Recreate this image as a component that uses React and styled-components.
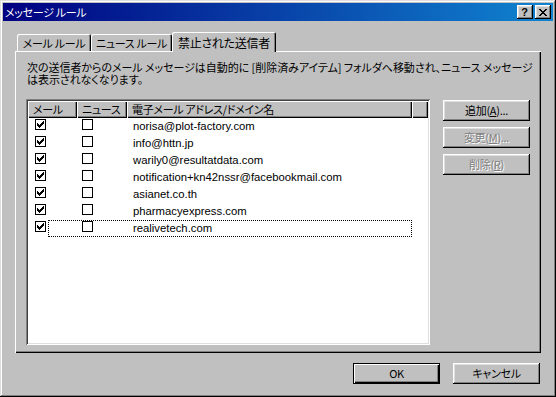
import React from 'react';
import styled, { createGlobalStyle, css } from 'styled-components';

// 画面データ
const senders = [
  'norisa@plot-factory.com',
  'info@httn.jp',
  'warily0@resultatdata.com',
  'notification+kn42nssr@facebookmail.com',
  'asianet.co.th',
  'pharmacyexpress.com',
  'realivetech.com',
];

// classic check glyph, pixel runs [x, y, w]
const checkRuns = [
  [7, 1, 1], [6, 2, 2], [1, 3, 1], [5, 3, 3], [1, 4, 2], [4, 4, 3],
  [1, 5, 5], [2, 6, 3], [3, 7, 1],
];
const closeRuns = [
  [0, 0, 2], [6, 0, 2], [1, 1, 2], [5, 1, 2], [2, 2, 4], [3, 3, 2],
  [2, 4, 4], [1, 5, 2], [5, 5, 2], [0, 6, 2], [6, 6, 2],
];

const Pixels = ({ runs, w, h }) => (
  <svg width={w} height={h} viewBox={`0 0 ${w} ${h}`} shapeRendering='crispEdges'>
    {runs.map(([x, y, rw], i) => <rect key={i} x={x} y={y} width={rw} height={1} fill='#000' />)}
  </svg>
);

const CheckBox = ({ checked }) => (
  <Box>{checked && <Pixels runs={checkRuns} w={9} h={9} />}</Box>
);

const App = () => (
  <>
    <GlobalStyle />
    <Window>
      <TitleBar>
        <Title>メッセージ ルール</Title>
        <TitleButtons>
          <CaptionButton>?</CaptionButton>
          <CaptionButton><Pixels runs={closeRuns} w={8} h={7} /></CaptionButton>
        </TitleButtons>
      </TitleBar>
      <Body>
        <TabStrip>
          <Tab width={74}>メール ルール</Tab>
          <Tab width={81}>ニュース ルール</Tab>
          <Tab width={104} active>禁止された送信者</Tab>
        </TabStrip>
        <Panel>
          <Description>
            <Line>次の送信者からのメール メッセージは自動的に [削除済みアイテム] フォルダへ移動され、ニュース メッセージ</Line>
            <Line>は表示されなくなります。</Line>
          </Description>
          <Content>
            <List>
              <Header>
                <HeaderCell>メール</HeaderCell>
                <HeaderCell>ニュース</HeaderCell>
                <HeaderCell>電子メール アドレス/ドメイン名</HeaderCell>
                <HeaderCell />
              </Header>
              {senders.map((s, i) => (
                <Row key={s}>
                  <MailCell><CheckBox checked /></MailCell>
                  <RowBody focused={i === senders.length - 1}>
                    <Gap />
                    <NewsCell><CheckBox /></NewsCell>
                    <AddrCell>{s}</AddrCell>
                  </RowBody>
                </Row>
              ))}
            </List>
            <SideButtons>
              <Button>追加(<u>A</u>)...</Button>
              <Button disabled>変更(<u>M</u>)...</Button>
              <Button disabled>削除(<u>R</u>)</Button>
            </SideButtons>
          </Content>
        </Panel>
        <Footer>
          <Button isDefault>OK</Button>
          <Button>キャンセル</Button>
        </Footer>
      </Body>
    </Window>
  </>
);

export default App;

const GlobalStyle = createGlobalStyle`
  html, body {
    margin: 0;
    padding: 0;
    background: #c0c0c0;
  }
  body {
    font-family: "Noto Sans CJK JP", "Liberation Sans", sans-serif;
    font-size: 11px;
    letter-spacing: -0.3px;
    font-feature-settings: "palt";
    color: #000;
  }
`;

const raised = css`
  box-shadow: inset -1px -1px #000, inset 1px 1px #fff, inset -2px -2px #808080, inset 2px 2px #dfdfdf;
`;

const Window = styled.div`
  width: 556px;
  height: 397px;
  box-sizing: border-box;
  padding: 3px;
  background: #c0c0c0;
  box-shadow: inset -1px -1px #000, inset 1px 1px #dfdfdf, inset -2px -2px #808080, inset 2px 2px #fff;
  display: flex;
  flex-direction: column;
`;

const TitleBar = styled.div`
  height: 18px;
  display: flex;
  align-items: center;
  padding: 0 2px;
  background: linear-gradient(to right, #000080, #1084d0);
`;

const Title = styled.div`
  color: #fff;
  font-size: 11px;
  line-height: 18px;
`;

const TitleButtons = styled.div`
  margin-left: auto;
  display: flex;
  gap: 2px;
`;

const CaptionButton = styled.div`
  width: 16px;
  height: 14px;
  background: #c0c0c0;
  ${raised};
  display: flex;
  align-items: center;
  justify-content: center;
  font-family: "Liberation Sans", sans-serif;
  font-weight: bold;
  font-size: 11px;
  line-height: 14px;
  letter-spacing: 0;
  padding-right: 1px;
  box-sizing: border-box;
`;

const Body = styled.div`
  flex: 1;
  display: flex;
  flex-direction: column;
  padding: 0 12px;
`;

const TabStrip = styled.div`
  margin-top: 11px;
  height: 19px;
  display: flex;
  align-items: flex-end;
  padding-left: 2px;
`;

const Tab = styled.div`
  width: ${p => p.width}px;
  height: ${p => (p.active ? 20 : 17)}px;
  margin-bottom: ${p => (p.active ? -1 : 0)}px;
  position: relative;
  z-index: ${p => (p.active ? 1 : 0)};
  box-sizing: border-box;
  display: flex;
  align-items: center;
  justify-content: center;
  padding-top: ${p => (p.active ? 0 : 1)}px;
  background: #c0c0c0;
  border-radius: 2px 2px 0 0;
  box-shadow: inset 1px 1px #fff, inset -1px 0 #000, inset -2px 0 #808080;
  font-size: ${p => (p.active ? 12 : 11)}px;
  white-space: nowrap;
`;

const Panel = styled.div`
  height: 302px;
  box-sizing: border-box;
  padding: 10px 11px 8px 11px;
  box-shadow: inset 1px 1px #fff, inset -1px -1px #000, inset -2px -2px #808080;
  display: flex;
  flex-direction: column;
`;

const Description = styled.div`
  padding-left: 1px;
  letter-spacing: -0.05px;
  white-space: nowrap;
`;

const Line = styled.div`
  height: 12px;
  line-height: 12px;
`;

const Content = styled.div`
  margin-top: 14px;
  display: flex;
  gap: 13px;
`;

const List = styled.div`
  width: 404px;
  height: 246px;
  box-sizing: border-box;
  padding: 2px;
  background: #fff;
  box-shadow: inset 1px 1px #808080, inset -1px -1px #fff, inset 2px 2px #404040, inset -2px -2px #dfdfdf;
`;

const Header = styled.div`
  display: grid;
  grid-template-columns: 49px 50px 285px 1fr;
  height: 17px;
`;

const HeaderCell = styled.div`
  background: #c0c0c0;
  box-shadow: inset 1px 1px #fff, inset -1px -1px #000, inset -2px -2px #808080;
  padding-left: 5px;
  line-height: 17px;
  white-space: nowrap;
  overflow: hidden;
`;

const Row = styled.div`
  display: flex;
  height: 17px;
`;

const MailCell = styled.div`
  width: 20px;
  padding: 1px 0 0 7px;
  box-sizing: border-box;
`;

const RowBody = styled.div`
  width: 364px;
  display: flex;
  outline: ${p => (p.focused ? '1px dotted #000' : 'none')};
  outline-offset: -1px;
`;

const Gap = styled.div`
  width: 29px;
`;

const NewsCell = styled.div`
  width: 50px;
  padding: 1px 0 0 5px;
  box-sizing: border-box;
`;

const AddrCell = styled.div`
  width: 285px;
  padding-left: 6px;
  box-sizing: border-box;
  font-family: "Liberation Sans", sans-serif;
  font-size: 11.3px;
  letter-spacing: 0;
  line-height: 17px;
  white-space: nowrap;
`;

const Box = styled.div`
  width: 11px;
  height: 11px;
  box-sizing: border-box;
  border: 1px solid #000;
  background: #fff;
  display: flex;
  svg { display: block; }
`;

const SideButtons = styled.div`
  margin-top: 1px;
  display: flex;
  flex-direction: column;
  gap: 6px;
`;

const Button = styled.button`
  width: 87px;
  height: 21px;
  padding: 0;
  border: none;
  background: #c0c0c0;
  font-family: "Noto Sans CJK JP", "Liberation Sans", sans-serif;
  font-size: 11px;
  letter-spacing: -0.3px;
  line-height: 21px;
  font-feature-settings: "palt";
  color: ${p => (p.disabled ? '#808080' : '#000')};
  text-shadow: ${p => (p.disabled ? '1px 1px #fff' : 'none')};
  ${p => (p.isDefault
    ? css`box-shadow: inset 0 0 0 1px #000, inset 2px 2px #fff, inset -2px -2px #000, inset -3px -3px #808080;`
    : raised)};
`;

const Footer = styled.div`
  margin-top: 10px;
  display: flex;
  justify-content: flex-end;
  gap: 13px;
  padding-right: 1px;
`;
